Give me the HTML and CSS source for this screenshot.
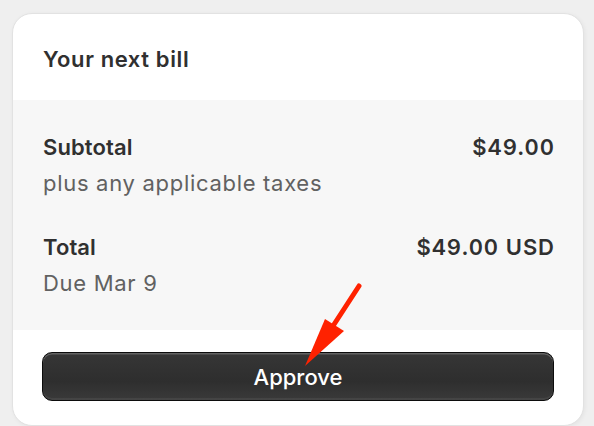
FILE: index.html
```html
<!DOCTYPE html>
<html>
<head>
<meta charset="utf-8">
<link rel="stylesheet" href="styles.css">
</head>
<body>
<div class="card">
  <div class="card-header">
    <h2 class="title">Your next bill</h2>
  </div>
  <div class="card-body">
    <div class="row">
      <div class="col">
        <div class="label">Subtotal</div>
        <div class="sub">plus any applicable taxes</div>
      </div>
      <div class="value">$49.00</div>
    </div>
    <div class="row">
      <div class="col">
        <div class="label">Total</div>
        <div class="sub">Due Mar 9</div>
      </div>
      <div class="value">$49.00 USD</div>
    </div>
  </div>
  <div class="card-footer">
    <button class="btn">Approve</button>
  </div>
</div>
<svg class="arrow" width="594" height="426" viewBox="0 0 594 426" aria-hidden="true">
  <line x1="359" y1="286" x2="333" y2="326" stroke="#ff2200" stroke-width="5" stroke-linecap="round"/>
  <polygon points="305,366 325,319 344,331" fill="#ff2200"/>
</svg>
</body>
</html>
```

FILE: styles.css
```css
* { box-sizing: border-box; }
html, body { margin: 0; padding: 0; }
body {
  background: #efefef;
  font-family: Inter, "Noto Sans", sans-serif;
  color: #303030;
  width: 594px;
  height: 426px;
  overflow: hidden;
  position: relative;
}
.card {
  margin: 13px 0 0 12px;
  width: 572px;
  height: 413px;
  background: #fff;
  border: 1px solid #e2e2e2;
  border-radius: 20px;
  overflow: hidden;
  box-shadow: 1px 1px 4px rgba(0,0,0,0.05);
  display: flex;
  flex-direction: column;
}
.card-header {
  height: 86px;
  padding: 33px 30px 0 30px;
}
.title {
  margin: 0;
  font-size: 22px;
  line-height: 24px;
  font-weight: 600;
  letter-spacing: 0.6px;
  color: #303030;
}
.card-body {
  background: #f7f7f7;
  padding: 29px 29px 29px 30px;
  display: flex;
  flex-direction: column;
  gap: 28px;
}
.row {
  display: flex;
  justify-content: space-between;
  align-items: flex-start;
}
.label, .value {
  font-size: 22px;
  line-height: 36px;
  font-weight: 600;
  color: #303030;
}
.label { letter-spacing: 0.1px; }
.value {
  letter-spacing: 0.9px;
  font-variant-numeric: tabular-nums;
  margin-right: -0.9px;
}
.sub {
  font-size: 22px;
  line-height: 36px;
  font-weight: 400;
  letter-spacing: 0.7px;
  color: #616161;
}
.card-footer {
  padding: 22px 28px 0 29px;
}
.btn {
  display: block;
  width: 512px;
  height: 49px;
  border: 1.5px solid #0c0c0c;
  border-radius: 10px;
  background: linear-gradient(#363636 0%, #2e2e2e 60%, #3a3a3a 100%);
  box-shadow: inset 0 1.5px 0 rgba(255,255,255,0.22), inset 0 -2px 0 rgba(255,255,255,0.06);
  color: #fff;
  font-family: Inter, "Noto Sans", sans-serif;
  font-size: 22px;
  font-weight: 500;
  line-height: 46px;
  padding: 0;
  text-align: center;
}
.arrow {
  position: absolute;
  left: 0;
  top: 0;
  pointer-events: none;
}
```
